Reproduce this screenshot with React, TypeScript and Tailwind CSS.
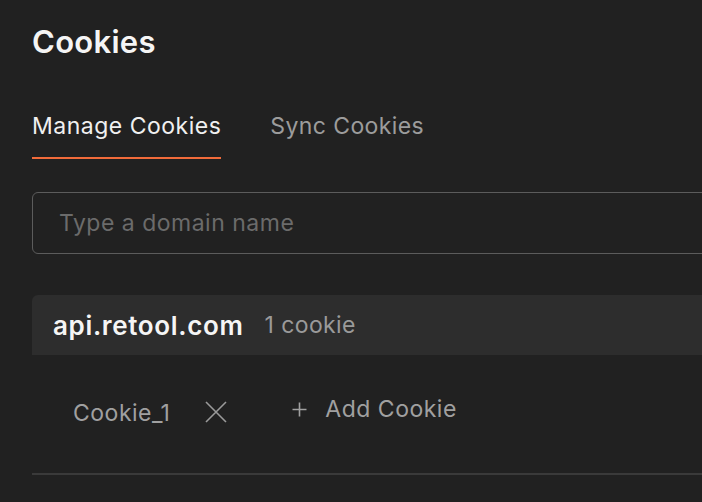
export default function App() {
  return (
    <div
      className="w-[702px] h-[502px] overflow-hidden bg-[#212121] text-white"
      style={{ fontFamily: "Inter, 'Noto Sans', sans-serif" }}
    >
      <div className="w-[900px] pl-[32px] pt-[24px]">
        <h1 className="text-[31px] leading-[36px] font-semibold tracking-[0.3px] text-[#f5f5f5]">Cookies</h1>

        <div className="mt-[50px] flex gap-[49px]">
          <div className="text-[23px] leading-[32px] tracking-[0.5px] pb-[15px] border-b-2 border-[#f26b3a] text-[#f0f0f0]">
            Manage Cookies
          </div>
          <div className="text-[23px] leading-[32px] tracking-[0.4px] pb-[15px] text-[#9c9c9c]">Sync Cookies</div>
        </div>

        <div className="mt-[33px] h-[62px] rounded-[6px] border-[1.5px] border-[#5c5c5c] flex items-center pl-[26px]">
          <span className="text-[23px] tracking-[0.5px] text-[#6b6b6b]">Type a domain name</span>
        </div>

        <div className="mt-[41px]">
          <div className="h-[60px] rounded-t-[6px] bg-[#2d2d2d] flex items-center pl-[21px] gap-[21px]">
            <span className="text-[26px] font-semibold tracking-[0.65px] text-[#f5f5f5]">api.retool.com</span>
            <span className="text-[23px] tracking-[0.4px] text-[#9a9a9a]">1 cookie</span>
          </div>
          <div className="h-[120px] border-b-2 border-[#3a3a3a] flex items-start pt-[42px] pl-[41px]">
            <span className="text-[23px] leading-[32px] tracking-[0.5px] text-[#a0a0a0]">Cookie_1</span>
            <svg
              className="ml-[35px] mt-[4px]"
              width="22"
              height="22"
              viewBox="0 0 22 22"
              fill="none"
              stroke="#9a9a9a"
              strokeWidth="1.6"
            >
              <path d="M1 1L21 21M21 1L1 21" />
            </svg>
            <div className="ml-[65px] -mt-[4px] flex items-center gap-[18px] text-[#a0a0a0]">
              <svg width="15" height="15" viewBox="0 0 15 15" fill="none" stroke="#a0a0a0" strokeWidth="1.6">
                <path d="M7.5 0.5V14.5M0.5 7.5H14.5" />
              </svg>
              <span className="text-[23px] leading-[32px] tracking-[0.5px]">Add Cookie</span>
            </div>
          </div>
        </div>
      </div>
    </div>
  );
}
